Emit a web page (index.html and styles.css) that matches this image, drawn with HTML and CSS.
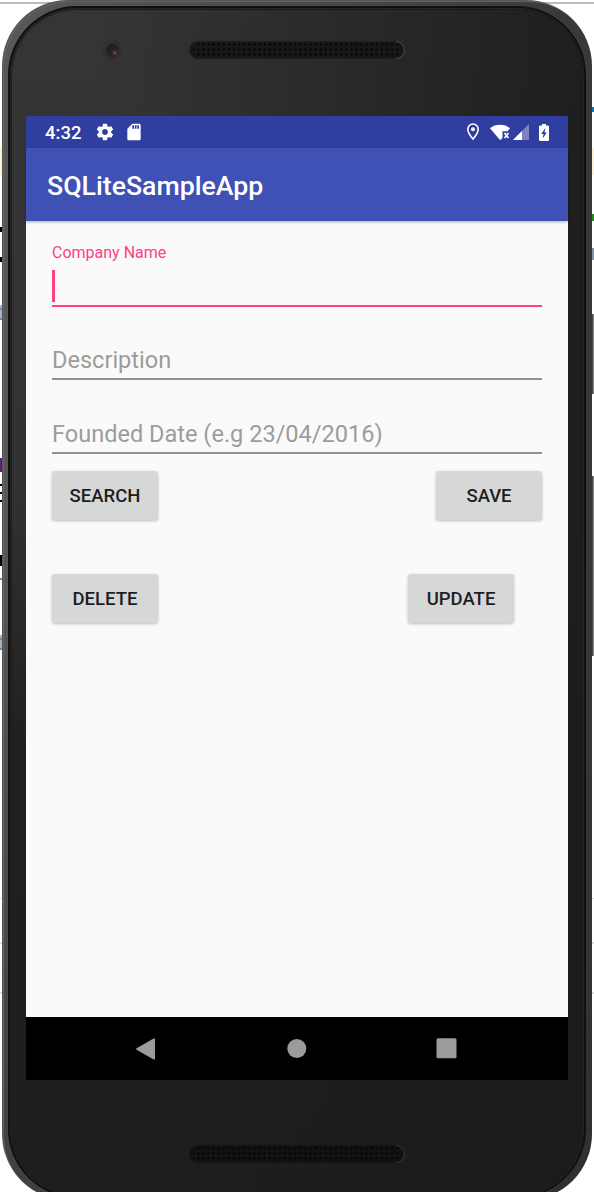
FILE: index.html
```html
<!DOCTYPE html>
<html lang="en">
<head>
<meta charset="utf-8">
<title>SQLiteSampleApp</title>
<link rel="stylesheet" href="styles.css">
</head>
<body>
<svg class="backdrop" width="594" height="1192" viewBox="0 0 594 1192" aria-hidden="true">
  <path fill="#bdbdbd" d="M0 2h594v2H0z"/>
  <path fill="#0878b8" d="M592 107h2v5h-2z"/>
  <path fill="#fbf0d8" d="M0 148h3v27H0zM591 148h3v27h-3z"/>
  <path fill="#000" d="M0 227h3v5H0zM0 257h3v5H0zM0 484h3v2H0zM0 492h3v2H0zM0 500h3v2H0zM0 555h3v11H0z"/>
  <path fill="#9eb7cf" d="M0 305h2v15H0zM0 635h2v15H0z"/>
  <path fill="#888" d="M0 308h3v2H0zM0 318h3v2H0zM0 578h3v2H0zM0 638h3v2H0zM0 648h3v2H0z"/>
  <path fill="#5a217c" d="M0 458h3v14H0z"/>
  <path fill="#238b20" d="M592 214h2v7h-2z"/>
  <path fill="#8195a6" d="M592 248h2v12h-2z"/>
  <path fill="#ddd" d="M0 898h3v1H0zM0 942h3v2H0zM0 992h3v2H0zM591 898h3v1h-3zM591 942h3v2h-3zM591 992h3v2h-3z"/>
  <path fill="#4b4848" d="M591 314h3v80h-3zM591 476h3v180h-3z"/>
  <path fill="#858585" d="M593 314h1v80h-1zM593 476h1v180h-1zM76 0h439v2H76z"/>
</svg>
<div class="phone">
  <div class="face">
    <div class="hardware hardware-top">
      <span class="camera"><span class="lens"></span></span>
      <svg class="speaker" width="217" height="20" viewBox="0 0 217 20">
        <defs><pattern id="holes" width="5.1" height="5" patternUnits="userSpaceOnUse" x="3" y="2.2"><circle cx="2.5" cy="2.5" r="1.25" fill="#020202"/><circle cx="3.5" cy="3.8" r=".5" fill="#363636"/></pattern></defs>
        <rect x="1" y="1" width="215" height="18" rx="9" fill="#171717" stroke="#292929"/>
        <rect x="5" y="2.2" width="207" height="15" rx="7" fill="url(#holes)"/>
        <path d="M208 1.5a8.5 8.5 0 0 1 0 17" fill="none" stroke="#484848"/>
      </svg>
    </div>
    <main class="screen">
      <div class="status">
        <span class="clock">4:32</span>
        <svg class="gear" width="20" height="20" viewBox="0 0 24 24"><path fill="#fff" d="M19.43 12.98c.04-.32.07-.64.07-.98s-.03-.66-.07-.98l2.11-1.65c.19-.15.24-.42.12-.64l-2-3.46c-.12-.22-.39-.3-.61-.22l-2.49 1c-.52-.4-1.08-.73-1.69-.98l-.38-2.65C14.46 2.18 14.25 2 14 2h-4c-.25 0-.46.18-.49.42l-.38 2.65c-.61.25-1.17.59-1.69.98l-2.49-1c-.23-.09-.49 0-.61.22l-2 3.46c-.13.22-.07.49.12.64l2.11 1.65c-.04.32-.07.65-.07.98s.03.66.07.98l-2.11 1.65c-.19.15-.24.42-.12.64l2 3.46c.12.22.39.3.61.22l2.49-1c.52.4 1.08.73 1.69.98l.38 2.65c.03.24.24.42.49.42h4c.25 0 .46-.18.49-.42l.38-2.65c.61-.25 1.17-.59 1.69-.98l2.49 1c.23.09.49 0 .61-.22l2-3.46c.12-.22.07-.49-.12-.64l-2.11-1.65zM12 15.5c-1.93 0-3.5-1.57-3.5-3.5s1.570-3.5 3.5-3.5 3.5 1.57 3.500 3.500-1.570 3.500-3.500 3.500z"/></svg>
        <svg class="card" width="20" height="20" viewBox="0 0 24 24"><path fill="#fff" d="M18 2h-8L4.020 8 4 20c0 1.100.9 2 2 2h12c1.100 0 2-.9 2-2V4c0-1.100-.9-2-2-2zm-6 6h-2V4h2v4zm3 0h-2V4h2v4zm3 0h-2V4h2v4z"/></svg>
        <svg class="pin" width="14" height="18" viewBox="0 0 14 18"><path d="M7 1a5.200 5.200 0 0 0-5.200 5.200C1.800 10 7 16 7 16s5.200-6 5.200-9.800A5.200 5.200 0 0 0 7 1z" fill="none" stroke="#fff" stroke-width="1.600"/><circle cx="7" cy="6.200" r="2" fill="#fff"/></svg>
        <svg class="wifi" width="21" height="17" viewBox="0 0 21 17"><path fill="#fff" d="M0 4.200C5.500-.4 14.500-.4 20 4.200L17.600 7.200H12.500V14l-1.500 1.500L10 16z"/><path d="m14.500 9 4 5m0-5-4 5" stroke="#fff" stroke-width="1.600"/></svg>
        <svg class="signal" width="16" height="16" viewBox="0 0 16 16"><path fill="#7b83c4" d="M16 0v16H0z"/><path fill="#fff" d="M9 7v9H0z"/></svg>
        <svg class="battery" width="10" height="17" viewBox="0 0 10 17"><path fill="#fff" d="M3 0h4v1.500h2.200l.8.800V16l-.8 1H.8L0 16V2.300l.8-.8H3z"/><path fill="#303f9f" d="M6.300 4 2.200 10h2.300l-.8 4.500 4.100-6H5.600z"/></svg>
      </div>
      <header class="appbar">SQLiteSampleApp</header>
      <form class="form">
        <div class="field focused"><label>Company Name</label><span class="caret"></span></div>
        <div class="field description">Description</div>
        <div class="field founded">Founded Date (e.g 23/04/2016)</div>
        <div class="actions"><button type="button">SEARCH</button><button type="button">SAVE</button></div>
        <div class="actions second"><button type="button">DELETE</button><button type="button">UPDATE</button></div>
      </form>
      <nav class="navbar">
        <svg width="20" height="22" viewBox="0 0 20 22"><path fill="#9b9b9b" d="M.6 10.200 17.600.4Q19 .2 19 1.500v19q0 1.500-1.400.9L.6 11.800q-1-.8 0-1.600z"/></svg>
        <svg width="22" height="20" viewBox="0 0 22 20"><circle cx="11.800" cy="9.500" r="9.500" fill="#9b9b9b"/></svg>
        <svg width="21" height="21" viewBox="0 0 21 21"><rect x=".5" y=".2" width="20" height="20" rx="1.500" fill="#9b9b9b"/></svg>
      </nav>
    </main>
    <div class="hardware hardware-bottom">
      <svg class="speaker" width="217" height="20" viewBox="0 0 217 20">
        <rect x="1" y="1" width="215" height="18" rx="9" fill="#111" stroke="#1b1b1b"/>
        <rect x="5" y="2.200" width="207" height="15" rx="7" fill="url(#holes)"/>
        <path d="M208 1.500a8.500 8.500 0 0 1 0 17" fill="none" stroke="#383838"/>
      </svg>
    </div>
  </div>
</div>
</body>
</html>
```
FILE: styles.css
```css
* { box-sizing: border-box; }
html { background: #fff; }
body { margin: 0; width: 594px; height: 1192px; overflow: hidden; font-family: Roboto, sans-serif; }
svg { display: block; flex: none; }
.backdrop { position: absolute; left: 0; top: 0; z-index: -1; }
.phone { width: 590px; height: 1200px; padding: 9px; margin-left: 2px; border-radius: 66px; background: linear-gradient(rgba(40,40,40,0) 45%, rgba(40,40,40,.5)), linear-gradient(90deg, #585858, #4a4a4a 50%, #3a3738); box-shadow: inset 1px 1px 0 #555, inset 2px 2px 0 #626262; }
.face { height: 1186px; padding: 0 15px; border-radius: 66px; box-shadow: inset 0 0 0 1px #1b1b1b, 0 0 0 1px #252525, 0 0 0 3px #101010; background: linear-gradient(90deg, rgba(27,27,27,0) 15%, rgba(27,27,27,.85)), linear-gradient(#353536, #323233 40%, #202020 62%, #1e1e1e); }
.hardware { display: flex; align-items: flex-start; }
.hardware-top { height: 107px; padding: 30px 0 0 74px; }
.camera { display: flex; align-items: center; justify-content: center; width: 24px; height: 24px; margin-top: -1px; border: 1px solid #39393a; border-radius: 50%; background: #303031; }
.lens { width: 13px; height: 13px; border-radius: 50%; background: radial-gradient(circle at 68% 68%, #9c5663 0, #4b2b38 12%, #242330 27%, #17171f 100%); }
.hardware-top .speaker { margin: 1px 0 0 64px; }
.hardware-bottom { padding: 64px 0 0 162px; }
.screen { display: flex; flex-direction: column; width: 542px; height: 964px; background: #fafafa; }
.status { display: flex; align-items: center; height: 32px; padding: 0 19px 0 18px; background: #303f9f; color: #fff; }
.clock { width: 51px; font-size: 18.5px; font-weight: 500; line-height: 32px; padding: 1px 0 0 1px; }
.card { margin-left: 9px; }
.pin { margin-left: auto; }
.wifi { margin-left: 10px; }
.signal { margin-left: 2px; }
.battery { margin-left: 10px; }
.appbar { height: 73px; padding: 3px 21px 0; line-height: 70px; background: #3f51b5; color: #fff; font-size: 26.7px; font-weight: 500; box-shadow: 0 1px 3px rgba(0,0,0,.3); }
.form { flex: 1; padding: 22px 26px 0; }
.field { width: 490px; color: #9c9c9c; font-size: 23.55px; line-height: 28px; border-bottom: 2px solid #929292; }
.focused { height: 64px; padding-top: 1px; border-color: #ff4081; }
.focused label { display: block; color: #ff4081; font-size: 16px; line-height: 18px; }
.caret { display: block; width: 3px; height: 32px; margin-top: 8px; background: #ff4081; }
.description { height: 73px; padding-top: 39px; }
.founded { height: 74px; padding-top: 40px; }
.actions { display: flex; justify-content: space-between; width: 490px; margin-top: 17px; }
.second { width: 462px; margin-top: 54px; }
button { width: 106px; height: 49px; padding: 1px 0 0; border: 0; border-radius: 3px; background: #d6d8d7; color: #1e1e1e; font: 500 18.5px Roboto, sans-serif; box-shadow: 0 1px 3px rgba(0,0,0,.25); }
.navbar { display: flex; align-items: center; justify-content: space-between; height: 63px; padding: 0 111px 0 110px; background: #000; }
```
